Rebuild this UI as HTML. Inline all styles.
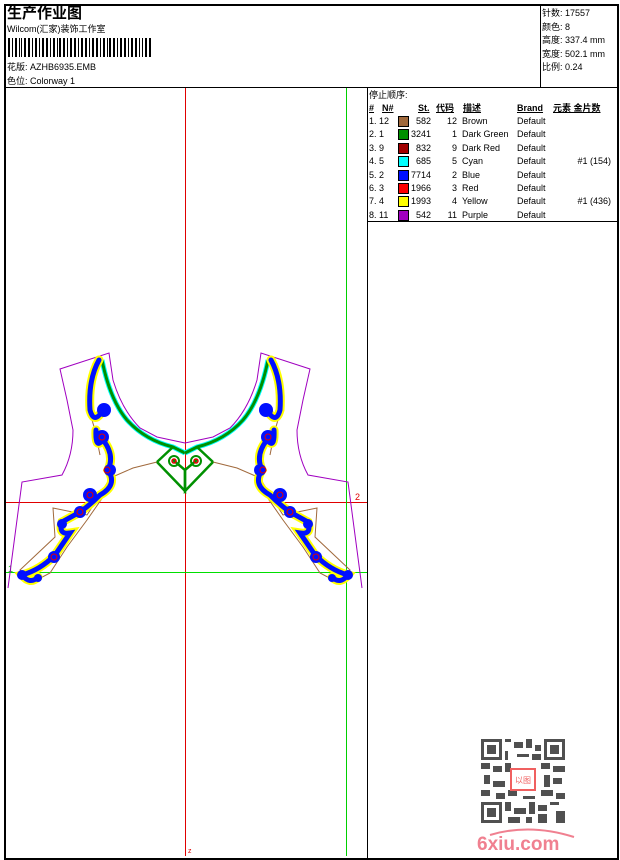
<!DOCTYPE html>
<html><head><meta charset="utf-8"><style>
body{margin:0;width:620px;height:860px;background:#fff;position:relative;overflow:hidden;font-family:"Liberation Sans","Noto Sans CJK SC",sans-serif;color:#000}
.a{position:absolute;white-space:nowrap}
.t{font-size:9px;line-height:10px}
</style></head><body>
<div class="a" style="left:4px;top:4px;width:611px;height:852px;border:2px solid #000"></div>
<div class="a" style="left:4px;top:87px;width:613px;height:1px;background:#000"></div>
<div class="a" style="left:540px;top:4px;width:1px;height:83px;background:#000"></div>
<div class="a" style="left:367px;top:88px;width:1px;height:770px;background:#000"></div>
<div class="a" style="left:367px;top:221px;width:250px;height:1px;background:#000"></div>

<div class="a" style="left:7px;top:6px;font-size:15px;font-weight:bold;line-height:16px">生产作业图</div>
<div class="a t" style="left:7px;top:24px">Wilcom(汇家)装饰工作室</div>
<svg class="a" style="left:8px;top:38px" width="145" height="19">
<g fill="#000">
<rect x="0" y="0" width="2" height="19"/><rect x="4" width="1" height="19"/><rect x="7" width="2" height="19"/><rect x="11" width="1" height="19"/><rect x="13" width="1" height="19"/><rect x="16" width="2" height="19"/><rect x="20" width="2" height="19"/><rect x="24" width="1" height="19"/><rect x="27" width="2" height="19"/><rect x="31" width="1" height="19"/><rect x="34" width="2" height="19"/><rect x="38" width="2" height="19"/><rect x="42" width="1" height="19"/><rect x="45" width="2" height="19"/><rect x="49" width="1" height="19"/><rect x="51" width="2" height="19"/><rect x="55" width="2" height="19"/><rect x="59" width="1" height="19"/><rect x="62" width="2" height="19"/><rect x="66" width="2" height="19"/><rect x="70" width="1" height="19"/><rect x="73" width="2" height="19"/><rect x="77" width="2" height="19"/><rect x="81" width="1" height="19"/><rect x="84" width="2" height="19"/><rect x="88" width="2" height="19"/><rect x="92" width="1" height="19"/><rect x="95" width="2" height="19"/><rect x="99" width="1" height="19"/><rect x="101" width="2" height="19"/><rect x="105" width="2" height="19"/><rect x="109" width="1" height="19"/><rect x="112" width="2" height="19"/><rect x="116" width="2" height="19"/><rect x="120" width="1" height="19"/><rect x="123" width="2" height="19"/><rect x="127" width="2" height="19"/><rect x="131" width="1" height="19"/><rect x="134" width="1" height="19"/><rect x="137" width="2" height="19"/><rect x="141" width="2" height="19"/>
</g></svg>
<div class="a t" style="left:7px;top:62px">花版: AZHB6935.EMB</div>
<div class="a t" style="left:7px;top:76px">色位: Colorway 1</div>

<div class="a t" style="left:542px;top:7px;line-height:13.5px">针数: 17557<br>颜色: 8<br>高度: 337.4 mm<br>宽度: 502.1 mm<br>比例: 0.24</div>

<div class="a t" style="left:369px;top:90px">停止顺序:</div>
<div class="a t" style="left:369px;top:103px;font-weight:bold;text-decoration:underline">#</div>
<div class="a t" style="left:382px;top:103px;font-weight:bold;text-decoration:underline">N#</div>
<div class="a t" style="left:418px;top:103px;font-weight:bold;text-decoration:underline">St.</div>
<div class="a t" style="left:436px;top:103px;font-weight:bold;text-decoration:underline">代码</div>
<div class="a t" style="left:463px;top:103px;font-weight:bold;text-decoration:underline">描述</div>
<div class="a t" style="left:517px;top:103px;font-weight:bold;text-decoration:underline">Brand</div>
<div class="a t" style="left:553px;top:103px;font-weight:bold;text-decoration:underline">元素 金片数</div>
<div id="rows"></div>
<script>
var d=[["1. 12","#a0693c","582","12","Brown",""],["2. 1","#009000","3241","1","Dark Green",""],["3. 9","#a00000","832","9","Dark Red",""],["4. 5","#00ffff","685","5","Cyan","#1 (154)"],["5. 2","#0010ff","7714","2","Blue",""],["6. 3","#ff0000","1966","3","Red",""],["7. 4","#ffff00","1993","4","Yellow","#1 (436)"],["8. 11","#a000c0","542","11","Purple",""]];
var h="";d.forEach(function(r,i){var y=116+i*13.4;
h+='<div class="a t" style="left:369px;top:'+y+'px">'+r[0]+'</div>';
h+='<div class="a" style="left:398px;top:'+(y)+'px;width:9px;height:9px;border:1px solid #000;background:'+r[1]+'"></div>';
h+='<div class="a t" style="left:400px;width:31px;text-align:right;top:'+y+'px">'+r[2]+'</div>';
h+='<div class="a t" style="left:440px;width:17px;text-align:right;top:'+y+'px">'+r[3]+'</div>';
h+='<div class="a t" style="left:462px;top:'+y+'px">'+r[4]+'</div>';
h+='<div class="a t" style="left:517px;top:'+y+'px">Default</div>';
if(r[5])h+='<div class="a t" style="left:560px;width:51px;text-align:right;top:'+y+'px">'+r[5]+'</div>';});
document.getElementById("rows").innerHTML=h;
</script>

<svg class="a" style="left:0;top:0" width="620" height="860">
<line x1="185.5" y1="88" x2="185.5" y2="856" stroke="#e00000"/>
<line x1="6" y1="502.5" x2="367" y2="502.5" stroke="#e00000"/>
<line x1="6" y1="572.5" x2="367" y2="572.5" stroke="#00e000"/>
<line x1="346.5" y1="88" x2="346.5" y2="856" stroke="#00d000"/>
<text x="355" y="500" font-size="9" fill="#e00000" font-family="Liberation Sans">2</text>
<text x="8" y="572" font-size="9" fill="#00c000" font-family="Liberation Sans">1</text>
<g id="half" fill="none">
<path d="M8,588 L22,482 L62,475 Q73,455 73,430 L67,400 L60,369 L109,353 L113,380 Q122,410 140,428 L157,437 L185,443" stroke="#a000c0" stroke-width="1"/>
<path d="M157,462 L133,468 L110,478 Q100,495 87,515 L53,508 L55,537 L20,570 L33,582 L50,573 L67,547 L87,520 L110,487 M100,360 Q88,380 89,410 L95,430 L100,455" stroke="#a0693c" stroke-width="1"/>
<path d="M102,360 Q110,400 127,420 Q145,440 173,447 L185,453" stroke="#00ffff" stroke-width="5"/>
<path d="M102,360 Q110,400 127,420 Q145,440 173,447 L185,453" stroke="#009000" stroke-width="3"/>
<path d="M157,462 L185,491 L185,470 L173,460 M173,447 L157,462" stroke="#009000" stroke-width="2.5"/>
<circle cx="174" cy="461" r="5" stroke="#009000" stroke-width="2"/><circle cx="174" cy="461" r="2" stroke="#e00000" stroke-width="1.5"/>
<g stroke-linecap="round">
<path d="M99,360 Q88,380 90,410 Q94,425 103,410 M96,430 Q95,450 103,440 Q115,455 108,470 Q118,485 100,495 Q90,505 80,512 L62,522 Q58,535 70,533 L55,555 Q40,570 22,575 Q30,585 38,577" stroke="#ffff00" stroke-width="9"/>
<path d="M99,360 Q88,380 90,410 Q94,425 103,410 M96,430 Q95,450 103,440 Q115,455 108,470 Q118,485 100,495 Q90,505 80,512 L62,522 Q58,535 70,533 L55,555 Q40,570 22,575 Q30,585 38,577" stroke="#0010ff" stroke-width="5"/>
</g>
<g fill="#0010ff"><circle cx="104" cy="410" r="7"/><circle cx="102" cy="437" r="7"/><circle cx="110" cy="470" r="6"/><circle cx="90" cy="495" r="7"/><circle cx="80" cy="512" r="6"/><circle cx="62" cy="524" r="5"/><circle cx="54" cy="557" r="6"/><circle cx="22" cy="575" r="5"/><circle cx="38" cy="578" r="4"/></g>
<g fill="none" stroke="#e00000" stroke-width="1"><circle cx="102" cy="437" r="3"/><circle cx="107" cy="470" r="3"/><circle cx="90" cy="495" r="3"/><circle cx="80" cy="512" r="3"/><circle cx="54" cy="557" r="3"/></g>
</g>
<use href="#half" transform="translate(370,0) scale(-1,1)"/>
</svg>

<svg class="a" style="left:481px;top:739px" width="84" height="84">
<rect width="84" height="84" fill="#fff"/>
<g fill="#505050">
<rect x="0" y="0" width="21" height="21"/><rect x="63" y="0" width="21" height="21"/><rect x="0" y="63" width="21" height="21"/>
</g>
<g fill="#fff"><rect x="3" y="3" width="15" height="15"/><rect x="66" y="3" width="15" height="15"/><rect x="3" y="66" width="15" height="15"/></g>
<g fill="#505050"><rect x="6" y="6" width="9" height="9"/><rect x="69" y="6" width="9" height="9"/><rect x="6" y="69" width="9" height="9"/>
<rect x="24" y="0" width="6" height="3"/><rect x="33" y="3" width="9" height="6"/><rect x="45" y="0" width="6" height="9"/><rect x="54" y="6" width="6" height="6"/><rect x="24" y="12" width="3" height="9"/><rect x="36" y="15" width="12" height="3"/><rect x="51" y="15" width="9" height="6"/>
<rect x="0" y="24" width="9" height="6"/><rect x="12" y="27" width="9" height="6"/><rect x="24" y="24" width="6" height="9"/><rect x="60" y="24" width="9" height="6"/><rect x="72" y="27" width="12" height="6"/>
<rect x="3" y="36" width="6" height="9"/><rect x="12" y="42" width="12" height="6"/><rect x="63" y="36" width="6" height="12"/><rect x="72" y="39" width="9" height="6"/>
<rect x="0" y="51" width="9" height="6"/><rect x="15" y="54" width="9" height="6"/><rect x="27" y="51" width="9" height="6"/><rect x="42" y="57" width="12" height="3"/><rect x="60" y="51" width="12" height="6"/><rect x="75" y="54" width="9" height="6"/>
<rect x="24" y="63" width="6" height="9"/><rect x="33" y="69" width="12" height="6"/><rect x="48" y="63" width="6" height="12"/><rect x="57" y="66" width="9" height="6"/><rect x="69" y="63" width="9" height="3"/><rect x="75" y="72" width="9" height="12"/><rect x="27" y="78" width="12" height="6"/><rect x="45" y="78" width="6" height="6"/><rect x="57" y="75" width="9" height="9"/>
</g>
<rect x="30" y="30" width="24" height="21" fill="#fff" stroke="#f06060" stroke-width="2"/>
<text x="42" y="44" font-size="8" fill="#f06060" text-anchor="middle" font-family="Noto Sans CJK SC">以图</text>
</svg>
<svg class="a" style="left:470px;top:825px" width="110" height="30">
<path d="M20,10 Q60,-2 104,12" fill="none" stroke="#f08090" stroke-width="2"/>
<text x="7" y="25" font-size="19" font-weight="bold" fill="#f08090" font-family="Liberation Sans">6xiu.com</text>
</svg>
<div class="a" style="left:188px;top:848px;font-size:7px;color:#e00000">z</div>
</body></html>
